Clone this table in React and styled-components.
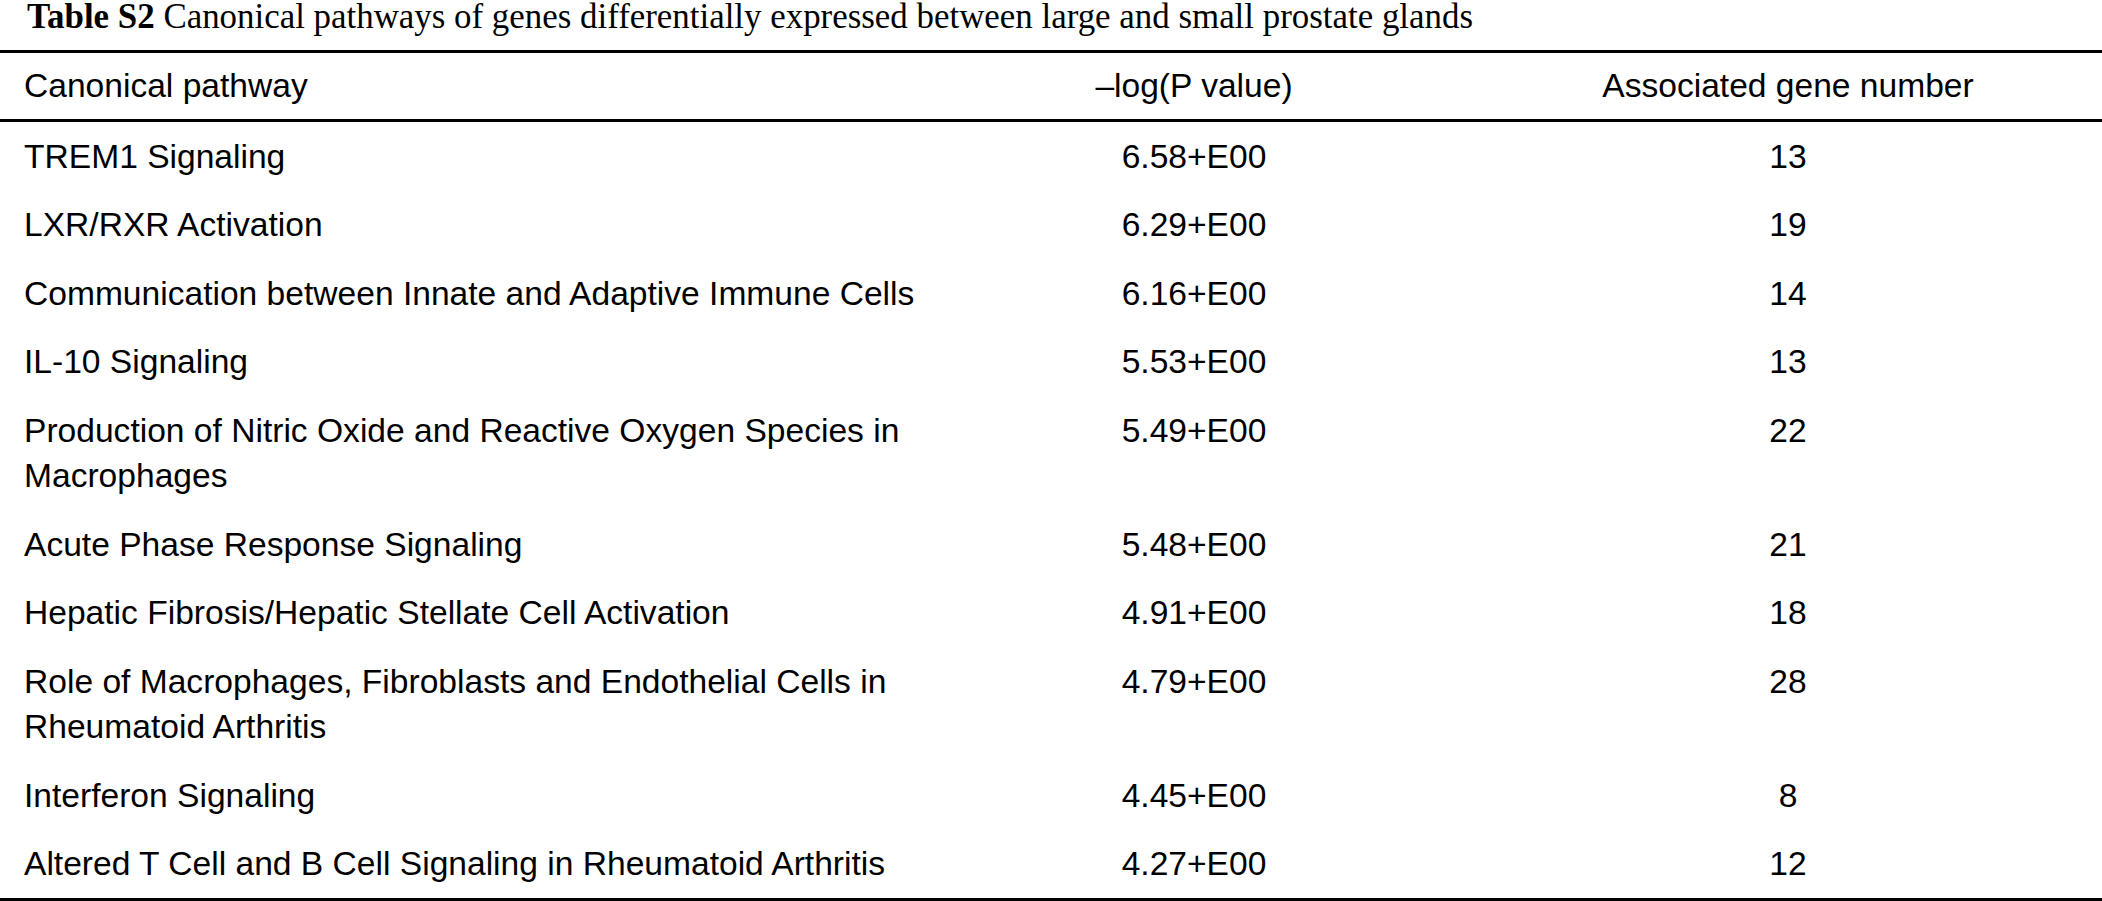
import React from "react";
import styled, { createGlobalStyle } from "styled-components";

const Global = createGlobalStyle`
  html, body { margin: 0; padding: 0; background: #fff; }
  body { color: #000; }
`;

const Page = styled.div`
  width: 2102px;
  background: #fff;
`;

const Caption = styled.div`
  font-family: "Liberation Serif", "Times New Roman", serif;
  font-size: 34.9px;
  line-height: 34px;
  padding: 0 0 15.5px 27px;
  color: #000;
  white-space: nowrap;
`;

const CaptionLabel = styled.span`
  font-weight: bold;
`;

const Table = styled.div`
  border-top: 3px solid #000;
  border-bottom: 3px solid #000;
  font-family: "Liberation Sans", Arial, sans-serif;
  font-size: 33.6px;
  line-height: 45.5px;
  color: #000;
`;

const Row = styled.div`
  display: grid;
  grid-template-columns: 1000px 388px 1fr;
  padding: ${(p) => (p.$head ? "10.5px 0" : "11.5px 0")};
  border-bottom: ${(p) => (p.$head ? "3px solid #000" : "none")};
`;

const Cell = styled.div`
  text-align: ${(p) => p.$align || "left"};
  padding-left: ${(p) => p.$pl || 0}px;
  padding-right: ${(p) => p.$pr || 0}px;
`;

const rows = [
  ["TREM1 Signaling", "6.58+E00", "13"],
  ["LXR/RXR Activation", "6.29+E00", "19"],
  ["Communication between Innate and Adaptive Immune Cells", "6.16+E00", "14"],
  ["IL-10 Signaling", "5.53+E00", "13"],
  ["Production of Nitric Oxide and Reactive Oxygen Species in Macrophages", "5.49+E00", "22"],
  ["Acute Phase Response Signaling", "5.48+E00", "21"],
  ["Hepatic Fibrosis/Hepatic Stellate Cell Activation", "4.91+E00", "18"],
  ["Role of Macrophages, Fibroblasts and Endothelial Cells in Rheumatoid Arthritis", "4.79+E00", "28"],
  ["Interferon Signaling", "4.45+E00", "8"],
  ["Altered T Cell and B Cell Signaling in Rheumatoid Arthritis", "4.27+E00", "12"],
];

export default function App() {
  return (
    <Page>
      <Global />
      <Caption>
        <CaptionLabel>Table S2</CaptionLabel> Canonical pathways of genes differentially expressed between large and small prostate glands
      </Caption>
      <Table>
        <Row $head>
          <Cell $pl={24} $pr={40}>Canonical pathway</Cell>
          <Cell $align="center">{"\u2013log(P value)"}</Cell>
          <Cell $align="center" $pl={86}>Associated gene number</Cell>
        </Row>
        {rows.map(([a, b, c]) => (
          <Row key={a}>
            <Cell $pl={24} $pr={40}>{a}</Cell>
            <Cell $align="center">{b}</Cell>
            <Cell $align="center" $pl={86}>{c}</Cell>
          </Row>
        ))}
      </Table>
    </Page>
  );
}
